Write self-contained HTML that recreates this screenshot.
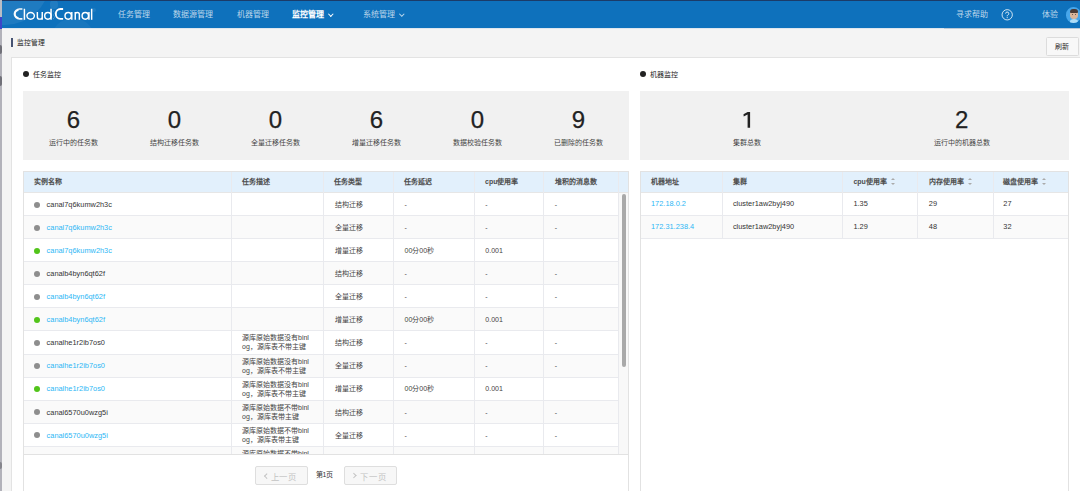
<!DOCTYPE html>
<html lang="zh-CN"><head><meta charset="utf-8">
<style>
*{box-sizing:border-box;margin:0;padding:0}
html,body{width:1080px;height:491px;overflow:hidden;background:#f4f4f4;font-family:"Liberation Sans",sans-serif;color:#333}
.abs{position:absolute}
#strip{left:0;top:0;width:2px;height:491px;background:linear-gradient(#b9bdc6 0,#b9bdc6 17px,#3d46c9 17px,#3d46c9 29px,#b2b2ba 29px)}
#hdr{left:2px;top:0;width:1078px;height:28.2px;background:#0e71bc;overflow:hidden;border-top:1px solid #1b3b68}
#hdrsh{left:2px;top:28.2px;width:1078px;height:1.2px;background:linear-gradient(rgba(60,120,180,0.28),rgba(255,255,255,0.5))}
.circ{position:absolute;border-radius:50%;background:rgba(255,255,255,0.06)}
.nav{position:absolute;top:9.3px;font-size:8px;line-height:10px;color:rgba(255,255,255,0.72);white-space:nowrap}
.nav.on{color:#fff;font-weight:bold}
.chev{display:inline-block;width:3.6px;height:3.6px;border-right:0.85px solid currentColor;border-bottom:0.85px solid currentColor;transform:rotate(45deg);margin-left:5px;position:relative;top:-2px}
#logo{position:absolute;left:11px;top:4px;font-size:16px;line-height:20px;color:#fff;letter-spacing:-0.4px}
#crumbbar{left:11px;top:38px;width:2px;height:9px;background:#465373}
#crumb{left:17.4px;top:37.8px;font-size:6.8px;line-height:10px;font-weight:500;color:#222}
#refresh{left:1045.7px;top:37px;width:33px;height:19px;background:#f8f8f8;border:1px solid #dcdcdc;border-radius:1.5px;font-size:7px;line-height:17.6px;text-align:center;color:#2a2a2a;font-weight:500;padding-right:0.2px}
#card{left:11px;top:57px;width:1080px;height:440px;background:#fff;border:1px solid #e3e3e3}
.dot{position:absolute;width:6px;height:6px;border-radius:50%;background:#222}
.title{position:absolute;font-size:7px;line-height:10px;font-weight:500;color:#222}
.statbox{position:absolute;top:91px;height:68.8px;background:#f1f1f1}
.stat{position:absolute;top:0;height:68px;text-align:center}
.stat .n{position:absolute;left:0;right:0;top:15px;font-size:24px;line-height:28px;color:#222;-webkit-text-stroke:0.25px #222}
.stat .l{position:absolute;left:0;right:0;top:46.5px;font-size:7px;line-height:10px;color:#444}
.tbl{position:absolute;top:171px;border:1px solid #e2e2e2;border-bottom:none;background:#fff}
.th{position:absolute;top:0;height:21px;background:#e2f0fc;border-bottom:1px solid #e6e6e6}
.cell{position:absolute;font-size:7px;color:#444;white-space:nowrap}
.hcell{position:absolute;top:0;height:21px;font-size:7px;line-height:21px;font-weight:bold;color:#4d4d4d;white-space:nowrap}
.vline{position:absolute;width:1px;background:#e9eaee}
.row{position:absolute;left:0;height:23.08px;border-bottom:1px solid #e9eaee}
.row.g{background:#fafafa}
.sdot{position:absolute;width:6px;height:6px;border-radius:50%;background:#8e8e8e}
.sdot.green{background:#52c41a}
.nm{position:absolute;font-size:7.4px;line-height:10px;color:#333}
.nm.link{color:#2db7f5}
.desc{position:absolute;font-size:7px;line-height:9px;color:#444;width:68px;white-space:normal;word-break:break-all}
.pbtn{position:absolute;top:466px;width:53px;height:19px;background:#f7f7f7;border:1px solid #dedede;border-radius:2px;color:#c3c3c3}
.pt{position:absolute;top:4.6px;font-size:8.3px;line-height:11px;white-space:nowrap;letter-spacing:0.9px;margin-left:0.6px}
.chv{position:absolute;top:7.2px;width:3.6px;height:3.6px;border-left:1px solid #c3c3c3;border-bottom:1px solid #c3c3c3}
.chv.l{left:9.4px;transform:rotate(45deg)}
.chv.r{left:7px;transform:rotate(-135deg)}
.sort{display:inline-block;position:relative;width:6px;height:7px;margin-left:4px;top:0.5px}
.sort:before,.sort:after{content:"";position:absolute;left:0;border-left:2.7px solid transparent;border-right:2.7px solid transparent}
.sort:before{top:0;border-bottom:2.6px solid #aaa}
.sort:after{bottom:0;border-top:2.6px solid #aaa}
</style></head><body>
<div id="strip" class="abs"></div>
<div class="abs" style="left:0;top:44.5px;width:1.6px;height:9.5px;background:#707078;border-radius:0 2px 2px 0"></div>
<div class="abs" style="left:0;top:76.3px;width:1.6px;height:10px;background:#707078;border-radius:0 2px 2px 0"></div>
<div class="abs" style="left:0;top:462px;width:1.6px;height:7px;background:#85858c;border-radius:0 2px 2px 0"></div>
<div id="hdr" class="abs">
  <div class="circ" style="left:-42px;top:-66px;width:90px;height:90px;background:rgba(255,255,255,0.075)"></div>
  <div class="circ" style="left:47.5px;top:-1.1px;width:8.8px;height:8.8px;background:rgba(255,255,255,0.08)"></div>
  <div class="circ" style="left:49px;top:17px;width:44px;height:44px;background:rgba(255,255,255,0.045)"></div>
  <div class="circ" style="left:90px;top:7px;width:4px;height:4px;background:rgba(255,255,255,0.08)"></div>
  <svg class="abs" style="left:-2px;top:-1px" width="100" height="28" viewBox="0 0 100 28" fill="none" stroke="#fff" stroke-width="1.45">
    <path d="M22.4 9.05 H19.6 A5.2 4.9 0 0 0 19.6 18.85 H22.4" stroke-width="1.6" opacity="0.95"/><path d="M18.5 10.3 A4.1 3.7 0 0 0 18.5 17.6" stroke-width="1.3"/>
    <path d="M24.4 8.75 V19.8"/>
    <ellipse cx="30.65" cy="15.85" rx="3.7" ry="3.3"/>
    <path d="M37.35 11.9 V16.9 A2.45 2.25 0 0 0 42.25 16.9 M42.25 11.9 V19.8"/>
    <ellipse cx="47.9" cy="15.85" rx="3.2" ry="3.3"/>
    <path d="M51.05 8.75 V19.8"/>
    <path d="M63.1 9 H60.4 A4.6 4.95 0 0 0 60.4 18.9 H63.1" stroke-width="1.9"/>
    <ellipse cx="68.2" cy="15.85" rx="3.2" ry="3.3"/>
    <path d="M71.8 11.9 V19.8"/>
    <path d="M75.25 19.8 V11.9 M75.25 14.5 A2.05 2.0 0 0 1 79.35 14.5 V19.8"/>
    <ellipse cx="85.3" cy="15.85" rx="3.2" ry="3.3"/>
    <path d="M88.95 11.9 V19.8"/>
    <path d="M91.65 8.75 V19.8"/>
    <g fill="#fff" stroke="none" opacity="0.55"><circle cx="53.3" cy="11" r="0.45"/><circle cx="54.4" cy="13" r="0.45"/><circle cx="53.5" cy="15" r="0.45"/><circle cx="54.5" cy="17" r="0.45"/><circle cx="53.6" cy="18.8" r="0.45"/></g>
  </svg>
  <div class="nav" style="left:115.5px">任务管理</div>
  <div class="nav" style="left:171px">数据源管理</div>
  <div class="nav" style="left:234.5px">机器管理</div>
  <div class="nav on" style="left:289.5px">监控管理<span class="chev"></span></div>
  <div class="nav" style="left:360.5px">系统管理<span class="chev"></span></div>
  <div class="nav" style="left:953.5px">寻求帮助</div>
  <svg class="abs" style="left:996px;top:5px" width="16" height="16" viewBox="0 0 16 16"><circle cx="9.2" cy="8.8" r="5.15" fill="none" stroke="rgba(255,255,255,0.8)" stroke-width="1"/><path d="M7.6 7.6 A1.6 1.6 0 1 1 9.7 9.1 Q9.2 9.4 9.2 10.3" fill="none" stroke="rgba(255,255,255,0.85)" stroke-width="0.95"/><circle cx="9.2" cy="11.6" r="0.55" fill="rgba(255,255,255,0.85)"/></svg>
  <div class="nav" style="left:1040px">体验</div>
  <div class="abs" style="left:1063.8px;top:6.4px;width:15.4px;height:15.4px;border-radius:50%;background:#47a6ea;overflow:hidden">
    <div class="abs" style="left:4.2px;top:12px;width:8px;height:5px;border-radius:50% 50% 0 0;background:#aedcf6"></div>
    <div class="abs" style="left:4.2px;top:3.5px;width:8px;height:8.5px;border-radius:35% 35% 45% 45%;background:#d9b59b"></div>
    <div class="abs" style="left:4.4px;top:2px;width:7.6px;height:3.6px;border-radius:3px 3px 1px 1px;background:#4b3b36"></div>
    <div class="abs" style="left:5.8px;top:6.5px;width:1px;height:1.5px;background:#6b5a50"></div>
    <div class="abs" style="left:9.4px;top:6.5px;width:1px;height:1.5px;background:#6b5a50"></div>
  </div>
</div>
<div id="hdrsh" class="abs"></div>
<div class="abs" style="left:944px;top:28.3px;width:136px;height:1.2px;background:rgba(70,100,130,0.22)"></div>
<div id="crumbbar" class="abs"></div>
<div id="crumb" class="abs">监控管理</div>
<div id="refresh" class="abs">刷新</div>
<div id="card" class="abs"></div>

<!-- task monitor -->
<div class="dot" style="left:23px;top:71px"></div>
<div class="title" style="left:33.2px;top:70px">任务监控</div>
<div class="statbox" style="left:23px;width:606px">
  <div class="stat" style="left:0;width:101px"><div class="n">6</div><div class="l">运行中的任务数</div></div>
  <div class="stat" style="left:101px;width:101px"><div class="n">0</div><div class="l">结构迁移任务数</div></div>
  <div class="stat" style="left:202px;width:101px"><div class="n">0</div><div class="l">全量迁移任务数</div></div>
  <div class="stat" style="left:303px;width:101px"><div class="n">6</div><div class="l">增量迁移任务数</div></div>
  <div class="stat" style="left:404px;width:101px"><div class="n">0</div><div class="l">数据校验任务数</div></div>
  <div class="stat" style="left:505px;width:101px"><div class="n">9</div><div class="l">已删除的任务数</div></div>
</div>

<!-- machine monitor -->
<div class="dot" style="left:640px;top:71px"></div>
<div class="title" style="left:650.2px;top:70px">机器监控</div>
<div class="statbox" style="left:640px;width:429px">
  <div class="stat" style="left:0;width:214.5px"><div class="n"><svg style="position:absolute;left:100px;top:2px" width="15" height="22" viewBox="740 108 15 22"><path d="M747.6 111.9 H750.1 V127.8 H747.6 V114.6 L743.7 116.5 L743.5 114.2 Z" fill="#222"/></svg></div><div class="l">集群总数</div></div>
  <div class="stat" style="left:214.5px;width:214.5px"><div class="n">2</div><div class="l">运行中的机器总数</div></div>
</div>

<div id="ltbl">
<div class="abs" style="left:23px;top:171px;width:606px;height:330px;border:1px solid #e2e2e2;background:#fff"></div>
<div class="abs" style="left:24px;top:172px;width:604px;height:21px;background:#e2f0fc;border-bottom:1px solid #e6e6e6"></div>
<div class="abs" style="left:24px;top:193px;width:594px;height:261px;overflow:hidden">
<div class="row" style="top:0.00px;width:594px"></div>
<div class="sdot" style="left:10px;top:8.50px"></div>
<div class="nm" style="left:22.6px;top:6.85px">canal7q6kumw2h3c</div>
<div class="cell" style="left:310.8px;top:6.85px;line-height:10px">结构迁移</div>
<div class="cell" style="left:380.5px;top:6.85px;line-height:10px">-</div>
<div class="cell" style="left:461.3px;top:6.85px;line-height:10px">-</div>
<div class="cell" style="left:530.8px;top:6.85px;line-height:10px">-</div>
<div class="row g" style="top:23.08px;width:594px"></div>
<div class="sdot" style="left:10px;top:31.58px"></div>
<div class="nm link" style="left:22.6px;top:29.93px">canal7q6kumw2h3c</div>
<div class="cell" style="left:310.8px;top:29.93px;line-height:10px">全量迁移</div>
<div class="cell" style="left:380.5px;top:29.93px;line-height:10px">-</div>
<div class="cell" style="left:461.3px;top:29.93px;line-height:10px">-</div>
<div class="cell" style="left:530.8px;top:29.93px;line-height:10px">-</div>
<div class="row" style="top:46.16px;width:594px"></div>
<div class="sdot green" style="left:10px;top:54.66px"></div>
<div class="nm link" style="left:22.6px;top:53.01px">canal7q6kumw2h3c</div>
<div class="cell" style="left:310.8px;top:53.01px;line-height:10px">增量迁移</div>
<div class="cell" style="left:380.5px;top:53.01px;line-height:10px">00分00秒</div>
<div class="cell" style="left:461.3px;top:53.01px;line-height:10px">0.001</div>
<div class="row g" style="top:69.24px;width:594px"></div>
<div class="sdot" style="left:10px;top:77.74px"></div>
<div class="nm" style="left:22.6px;top:76.09px">canalb4byn6qt62f</div>
<div class="cell" style="left:310.8px;top:76.09px;line-height:10px">结构迁移</div>
<div class="cell" style="left:380.5px;top:76.09px;line-height:10px">-</div>
<div class="cell" style="left:461.3px;top:76.09px;line-height:10px">-</div>
<div class="cell" style="left:530.8px;top:76.09px;line-height:10px">-</div>
<div class="row" style="top:92.32px;width:594px"></div>
<div class="sdot" style="left:10px;top:100.82px"></div>
<div class="nm link" style="left:22.6px;top:99.17px">canalb4byn6qt62f</div>
<div class="cell" style="left:310.8px;top:99.17px;line-height:10px">全量迁移</div>
<div class="cell" style="left:380.5px;top:99.17px;line-height:10px">-</div>
<div class="cell" style="left:461.3px;top:99.17px;line-height:10px">-</div>
<div class="cell" style="left:530.8px;top:99.17px;line-height:10px">-</div>
<div class="row g" style="top:115.40px;width:594px"></div>
<div class="sdot green" style="left:10px;top:123.90px"></div>
<div class="nm link" style="left:22.6px;top:122.25px">canalb4byn6qt62f</div>
<div class="cell" style="left:310.8px;top:122.25px;line-height:10px">增量迁移</div>
<div class="cell" style="left:380.5px;top:122.25px;line-height:10px">00分00秒</div>
<div class="cell" style="left:461.3px;top:122.25px;line-height:10px">0.001</div>
<div class="row" style="top:138.48px;width:594px"></div>
<div class="sdot" style="left:10px;top:146.98px"></div>
<div class="nm" style="left:22.6px;top:145.33px">canalhe1r2ib7os0</div>
<div class="desc" style="left:218px;top:140.48px">源库原始数据没有binlog，源库表不带主键</div>
<div class="cell" style="left:310.8px;top:145.33px;line-height:10px">结构迁移</div>
<div class="cell" style="left:380.5px;top:145.33px;line-height:10px">-</div>
<div class="cell" style="left:461.3px;top:145.33px;line-height:10px">-</div>
<div class="cell" style="left:530.8px;top:145.33px;line-height:10px">-</div>
<div class="row g" style="top:161.56px;width:594px"></div>
<div class="sdot" style="left:10px;top:170.06px"></div>
<div class="nm link" style="left:22.6px;top:168.41px">canalhe1r2ib7os0</div>
<div class="desc" style="left:218px;top:163.56px">源库原始数据没有binlog，源库表不带主键</div>
<div class="cell" style="left:310.8px;top:168.41px;line-height:10px">全量迁移</div>
<div class="cell" style="left:380.5px;top:168.41px;line-height:10px">-</div>
<div class="cell" style="left:461.3px;top:168.41px;line-height:10px">-</div>
<div class="cell" style="left:530.8px;top:168.41px;line-height:10px">-</div>
<div class="row" style="top:184.64px;width:594px"></div>
<div class="sdot green" style="left:10px;top:193.14px"></div>
<div class="nm link" style="left:22.6px;top:191.49px">canalhe1r2ib7os0</div>
<div class="desc" style="left:218px;top:186.64px">源库原始数据没有binlog，源库表不带主键</div>
<div class="cell" style="left:310.8px;top:191.49px;line-height:10px">增量迁移</div>
<div class="cell" style="left:380.5px;top:191.49px;line-height:10px">00分00秒</div>
<div class="cell" style="left:461.3px;top:191.49px;line-height:10px">0.001</div>
<div class="row g" style="top:207.72px;width:594px"></div>
<div class="sdot" style="left:10px;top:216.22px"></div>
<div class="nm" style="left:22.6px;top:214.57px">canal6570u0wzg5i</div>
<div class="desc" style="left:218px;top:209.72px">源库原始数据不带binlog，源库表带主键</div>
<div class="cell" style="left:310.8px;top:214.57px;line-height:10px">结构迁移</div>
<div class="cell" style="left:380.5px;top:214.57px;line-height:10px">-</div>
<div class="cell" style="left:461.3px;top:214.57px;line-height:10px">-</div>
<div class="cell" style="left:530.8px;top:214.57px;line-height:10px">-</div>
<div class="row" style="top:230.80px;width:594px"></div>
<div class="sdot" style="left:10px;top:239.30px"></div>
<div class="nm link" style="left:22.6px;top:237.65px">canal6570u0wzg5i</div>
<div class="desc" style="left:218px;top:232.80px">源库原始数据不带binlog，源库表带主键</div>
<div class="cell" style="left:310.8px;top:237.65px;line-height:10px">全量迁移</div>
<div class="cell" style="left:380.5px;top:237.65px;line-height:10px">-</div>
<div class="cell" style="left:461.3px;top:237.65px;line-height:10px">-</div>
<div class="cell" style="left:530.8px;top:237.65px;line-height:10px">-</div>
<div class="row g" style="top:253.88px;width:594px"></div>
<div class="sdot" style="left:10px;top:262.38px"></div>
<div class="nm" style="left:22.6px;top:260.73px">canal6570u0wzg5i</div>
<div class="desc" style="left:218px;top:255.88px">源库原始数据不带binlog，源库表带主键</div>
<div class="cell" style="left:310.8px;top:260.73px;line-height:10px">结构迁移</div>
<div class="cell" style="left:380.5px;top:260.73px;line-height:10px">-</div>
<div class="cell" style="left:461.3px;top:260.73px;line-height:10px">-</div>
<div class="cell" style="left:530.8px;top:260.73px;line-height:10px">-</div>
</div>
<div class="vline" style="left:231px;top:172px;height:282px"></div>
<div class="vline" style="left:323px;top:172px;height:282px"></div>
<div class="vline" style="left:393px;top:172px;height:282px"></div>
<div class="vline" style="left:474px;top:172px;height:282px"></div>
<div class="vline" style="left:543px;top:172px;height:282px"></div>
<div class="vline" style="left:618px;top:172px;height:282px"></div>
<div class="abs" style="left:619px;top:193px;width:9px;height:261px;background:#f8f8f8"></div>
<div class="abs" style="left:622px;top:194px;width:4.3px;height:172.5px;border-radius:2px;background:#a9a9a9"></div>
<div class="abs" style="left:24px;top:454px;width:604px;height:1px;background:#e2e2e2"></div>
<div class="hcell" style="left:34px;top:171.4px">实例名称</div>
<div class="hcell" style="left:242px;top:171.4px">任务描述</div>
<div class="hcell" style="left:334.3px;top:171.4px">任务类型</div>
<div class="hcell" style="left:404px;top:171.4px">任务延迟</div>
<div class="hcell" style="left:485px;top:171.4px">cpu使用率</div>
<div class="hcell" style="left:554.5px;top:171.4px">堆积的消息数</div>
<div class="pbtn" style="left:255px"><span class="chv l"></span><span class="pt" style="left:14px">上一页</span></div>
<div class="abs" style="left:315.5px;top:470px;font-size:7px;line-height:10px;color:#333">第1页</div>
<div class="pbtn" style="left:344px"><span class="chv r"></span><span class="pt" style="left:14.5px">下一页</span></div>
</div><!--/ltbl-->
<div id="rtbl">
<div class="abs" style="left:640px;top:171px;width:429px;height:330px;border:1px solid #e2e2e2;background:#fff"></div>
<div class="abs" style="left:641px;top:172px;width:427px;height:21px;background:#e2f0fc;border-bottom:1px solid #e6e6e6"></div>
<div class="abs" style="left:641px;top:193.00px;width:427px;height:23.08px;background:#fff;border-bottom:1px solid #e9eaee"></div>
<div class="nm link" style="left:651px;top:199.25px">172.18.0.2</div>
<div class="nm" style="left:732.9px;top:199.25px">cluster1aw2byj490</div>
<div class="nm" style="left:853.4px;top:199.25px">1.35</div>
<div class="nm" style="left:928.8px;top:199.25px">29</div>
<div class="nm" style="left:1003.3px;top:199.25px">27</div>
<div class="abs" style="left:641px;top:216.08px;width:427px;height:23.08px;background:#fafafa;border-bottom:1px solid #e9eaee"></div>
<div class="nm link" style="left:651px;top:222.33px">172.31.238.4</div>
<div class="nm" style="left:732.9px;top:222.33px">cluster1aw2byj490</div>
<div class="nm" style="left:853.4px;top:222.33px">1.29</div>
<div class="nm" style="left:928.8px;top:222.33px">48</div>
<div class="nm" style="left:1003.3px;top:222.33px">32</div>
<div class="vline" style="left:722px;top:172px;height:67.16px"></div>
<div class="vline" style="left:842px;top:172px;height:67.16px"></div>
<div class="vline" style="left:917px;top:172px;height:67.16px"></div>
<div class="vline" style="left:993px;top:172px;height:67.16px"></div>
<div class="hcell" style="left:651px;top:171.4px">机器地址</div>
<div class="hcell" style="left:732.9px;top:171.4px">集群</div>
<div class="hcell" style="left:853.4px;top:171.4px">cpu使用率<span class="sort"></span></div>
<div class="hcell" style="left:928.8px;top:171.4px">内存使用率<span class="sort"></span></div>
<div class="hcell" style="left:1003.3px;top:171.4px">磁盘使用率<span class="sort"></span></div>
</div><!--/rtbl-->
</body></html>
